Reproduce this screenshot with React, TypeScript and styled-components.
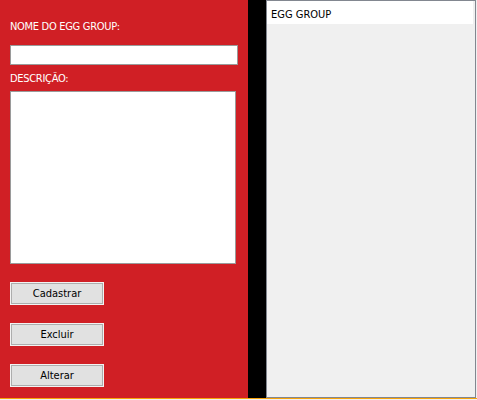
import React from 'react';
import styled, { createGlobalStyle } from 'styled-components';

const GlobalStyle = createGlobalStyle`
  html, body {
    margin: 0;
    padding: 0;
    background: #f0f0f0;
  }
  body {
    font-family: 'DejaVu Sans Condensed', 'Liberation Sans', sans-serif;
    font-size: 11px;
  }
`;

const Window = styled.div`
  width: 477px;
  height: 400px;
  display: flex;
  flex-direction: column;
  background: #f0f0f0;
`;

const Main = styled.div`
  display: flex;
  height: 398px;
`;

const FormPanel = styled.div`
  width: 248px;
  background-color: #d01f25;
  display: flex;
  flex-direction: column;
  align-items: flex-start;
  padding: 20px 0 0 10px;
  box-sizing: border-box;
`;

const Divider = styled.div`
  width: 18px;
  background-color: #000;
`;

const ListPanel = styled.div`
  width: 210px;
  box-sizing: border-box;
  border: 1px solid #828790;
  background-color: #f0f0f0;
  display: flex;
  flex-direction: column;
`;

const ListHeader = styled.div`
  height: 23px;
  width: 206px;
  box-sizing: border-box;
  background: #fff;
  color: #000;
  padding: 4px 0 0 4px;
  line-height: 19px;
`;

const Label = styled.label<{ $gap?: number }>`
  color: #fff;
  line-height: 13px;
  letter-spacing: -0.3px;
  margin-top: ${(p) => p.$gap ?? 0}px;
`;

const TextInput = styled.input`
  width: 228px;
  height: 20px;
  margin-top: 12px;
  box-sizing: border-box;
  border: 1px solid #9a9a9a;
  background: #fff;
  outline: none;
`;

const TextArea = styled.textarea`
  width: 226px;
  height: 173px;
  margin-top: 6px;
  box-sizing: border-box;
  border: 1px solid #9a9a9a;
  background: #fff;
  resize: none;
  outline: none;
`;

const Button = styled.button`
  width: 94px;
  height: 23px;
  margin-top: 18px;
  box-sizing: border-box;
  border: 1px solid #f2f2f2;
  box-shadow: inset 0 0 0 1px #adadad;
  background: #e1e1e1;
  color: #000;
  font-family: inherit;
  font-size: 11px;
  padding: 0;
  cursor: pointer;
`;

const BottomLine = styled.div`
  height: 1px;
  background: #f7a30b;
`;

const App = () => {
  return (
    <Window>
      <GlobalStyle />
      <Main>
        <FormPanel>
          <Label>NOME DO EGG GROUP:</Label>
          <TextInput type="text" />
          <Label $gap={7}>DESCRIÇÃO:</Label>
          <TextArea />
          <Button type="button">Cadastrar</Button>
          <Button type="button">Excluir</Button>
          <Button type="button">Alterar</Button>
        </FormPanel>
        <Divider />
        <ListPanel>
          <ListHeader>EGG GROUP</ListHeader>
        </ListPanel>
      </Main>
      <BottomLine />
    </Window>
  );
};

export default App;
